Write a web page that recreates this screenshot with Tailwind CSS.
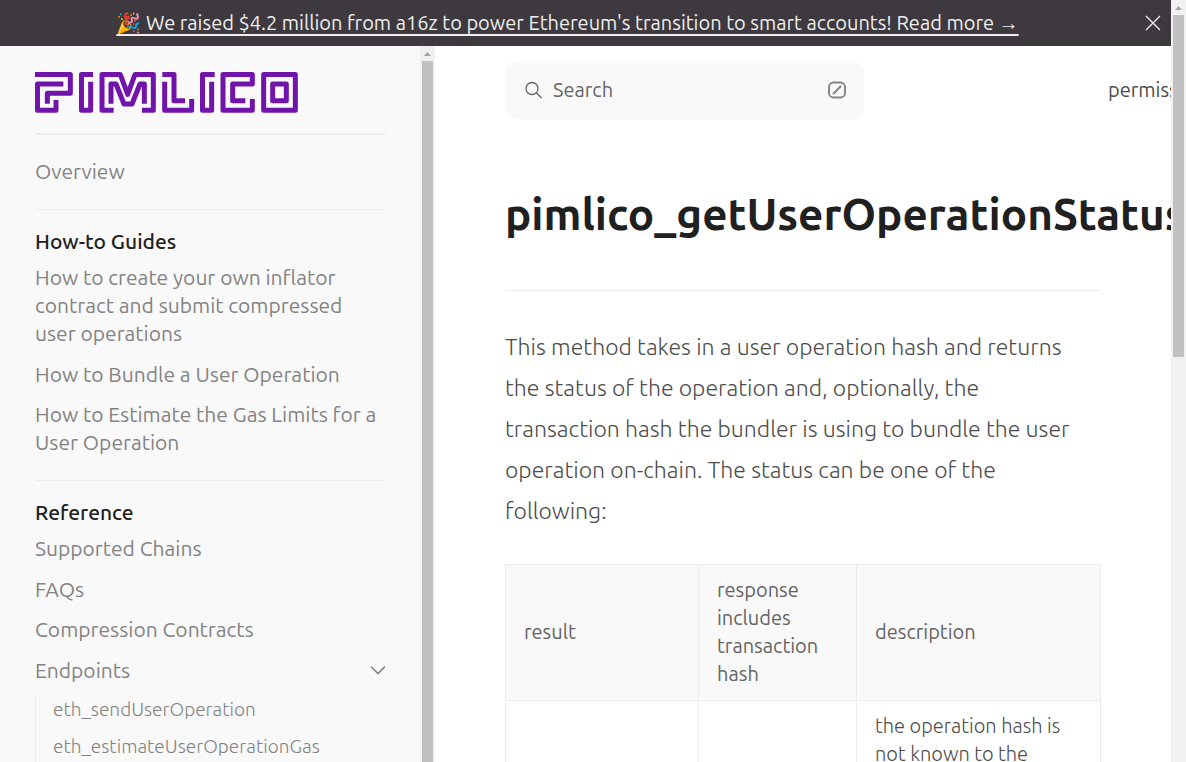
<!DOCTYPE html>
<html lang="en">
<head>
<meta charset="utf-8">
<title>pimlico_getUserOperationStatus</title>
<script src="https://cdn.jsdelivr.net/npm/@tailwindcss/browser@4"></script>
</head>
<body class="h-screen overflow-hidden flex bg-white font-['Ubuntu','Open_Sans','Noto_Sans',sans-serif] text-[#4c4c4c]">
<div class="flex-1 min-w-0 flex flex-col">
  <header class="h-[46px] shrink-0 flex items-center bg-[#3d393f] text-[#eeeeee]">
    <div class="flex-1 text-center px-3 whitespace-nowrap"><a href="#" class="text-[20px] leading-[28px] underline decoration-2 underline-offset-4">🎉 We raised $4.2 million from a16z to power Ethereum's transition to smart accounts! Read more →</a></div>
    <button aria-label="Dismiss banner" class="w-9 h-9 shrink-0 flex items-center justify-center">
      <svg class="w-4 h-4" viewBox="0 0 16 16" fill="none" stroke="currentColor" stroke-width="1.4"><path d="M1 1 15 15M15 1 1 15"/></svg>
    </button>
  </header>
  <div class="flex-1 min-h-0 flex">
    <aside class="w-[435px] shrink-0 flex bg-[#f9f9f9] text-[#838383]">
      <nav class="flex-1 min-w-0 overflow-hidden px-[35px] text-[21px] leading-[28px]">
        <a href="#" aria-label="Pimlico" class="block pt-[26px] pb-5 border-b-2 border-[#ececec]">
          <svg class="w-[263px] h-[41px]" viewBox="45 36 789 123" fill="none" stroke="#7115aa" stroke-width="15" stroke-linejoin="round">
            <path d="M45 43.500H151V100H82V131M130 72H52.500V151H108V120"/>
            <path d="M219 43.500H184.500V151H212V65"/>
            <path d="M281 151H246V43.500H301L323 103 345 43.500H400V151H366M273 131V72H288L312 132H336L360 72H373V131"/>
            <path d="M427 43.500H462V122H495M434 65V151H515V117"/>
            <path d="M584 43.500H547.500V151H575V65"/>
            <path d="M676 122H638V72H697V43.500H609V151H697V117"/>
            <path d="M731 43.500H826V151H731ZM758 72H799V122H758Z"/>
          </svg>
        </a>
        <div class="pt-[22px] pb-6 border-b border-[#ececec]"><a href="#" class="block">Overview</a></div>
        <section class="pt-[17px] pb-6 border-b border-[#ececec]">
          <h2 class="font-medium text-[#202020] mb-2">How-to Guides</h2>
          <ul class="flex flex-col gap-3">
            <li class="pb-px"><a href="#" class="block">How to create your own inflator<br>contract and submit compressed<br>user operations</a></li>
            <li><a href="#" class="block">How to Bundle a User Operation</a></li>
            <li><a href="#" class="block whitespace-nowrap">How to Estimate the Gas Limits for a<br>User Operation</a></li>
          </ul>
        </section>
        <section class="pt-[17px]">
          <h2 class="font-medium text-[#202020] mb-2">Reference</h2>
          <ul class="flex flex-col gap-3">
            <li class="pb-px"><a href="#" class="block">Supported Chains</a></li>
            <li><a href="#" class="block">FAQs</a></li>
            <li class="pb-px"><a href="#" class="block">Compression Contracts</a></li>
            <li>
              <button class="w-full flex items-center justify-between text-left">Endpoints
                <svg class="w-4 h-4" viewBox="0 0 16 16" fill="none" stroke="currentColor" stroke-width="1.6"><path d="M2 4.500 9 11.500 16 4.500"/></svg>
              </button>
              <ul class="mt-3 pt-px pl-[17px] border-l border-[#ececec] flex flex-col gap-[13px] text-[19px] leading-6 font-light">
                <li><a href="#" class="block">eth_sendUserOperation</a></li>
                <li class="pb-5"><a href="#" class="block">eth_estimateUserOperationGas</a></li>
              </ul>
            </li>
          </ul>
        </section>
      </nav>
      <div aria-hidden="true" class="w-[15px] shrink-0 bg-[#f1f1f1] flex flex-col items-center">
        <svg class="w-[15px] h-[15px] shrink-0" viewBox="0 0 15 15" fill="#a3a3a3"><path d="M4 10 7.500 6 11 10Z"/></svg>
        <div class="w-[11px] flex-1 bg-[#c1c1c1]"></div>
      </div>
    </aside>
    <main class="flex-1 min-w-0 overflow-hidden pl-[70px]">
      <div class="flex items-center mt-[15px] h-[58px]">
        <button class="w-[359px] h-full shrink-0 rounded-xl bg-[#f9f9f9] flex items-center pl-5 pr-[18px] text-[20px] leading-[28px] text-[#646464]">
          <svg class="w-[18px] h-[18px] mr-[10px]" viewBox="0 0 18 18" fill="none" stroke="currentColor" stroke-width="1.3"><circle cx="7" cy="7.500" r="6"/><path d="M11.300 11.800 16.500 17"/></svg>
          Search
          <svg class="ml-auto w-[18px] h-[18px] text-[#838383]" viewBox="0 0 18 18" fill="none" stroke="currentColor" stroke-width="1.900" stroke-linecap="round"><rect x="1" y="1.500" width="16" height="15" rx="4.500"/><path d="M5.500 12.500 12.500 5.500"/></svg>
        </button>
        <a href="#" class="ml-[244px] shrink-0 text-[20px] leading-[28px]">permissionless.js</a>
      </div>
      <div class="mr-[70px]">
        <h1 class="pt-[62px] pb-[43px] border-b border-[#ececec] text-[44px] leading-[66px] font-semibold text-[#202020] whitespace-nowrap">pimlico_getUserOperationStatus</h1>
        <p class="mt-[35px] text-[23px] leading-[41px] font-light whitespace-nowrap">This method takes in a user operation hash and returns<br>the status of the operation and, optionally, the<br>transaction hash the bundler is using to bundle the user<br>operation on-chain. The status can be one of the<br>following:</p>
        <table class="mt-[33px] w-full table-fixed border-collapse text-left text-[20px] leading-[28px]">
          <colgroup><col class="w-[193px]"><col class="w-[158px]"><col></colgroup>
          <thead><tr class="bg-[#f9f9f9] text-[#646464]">
            <th class="border border-[#ececec] px-[18px] pt-[11px] pb-3 font-normal">result</th>
            <th class="border border-[#ececec] px-[18px] pt-[11px] pb-3 font-normal">response<br>includes<br>transaction<br>hash</th>
            <th class="border border-[#ececec] px-[18px] pt-[11px] pb-3 font-normal">description</th>
          </tr></thead>
          <tbody><tr>
            <td class="border border-[#ececec] px-[18px] py-[11px]"></td>
            <td class="border border-[#ececec] px-[18px] py-[11px]"></td>
            <td class="border border-[#ececec] px-[18px] py-[11px] font-light">the operation hash is<br>not known to the<br>bundler</td>
          </tr></tbody>
        </table>
      </div>
    </main>
  </div>
</div>
<div aria-hidden="true" class="w-[15px] shrink-0 bg-[#f1f1f1] flex flex-col items-center">
  <svg class="w-[15px] h-[15px] shrink-0" viewBox="0 0 15 15" fill="#a3a3a3"><path d="M4 10 7.500 6 11 10Z"/></svg>
  <div class="w-[11px] h-[342px] bg-[#c1c1c1]"></div>
</div>
</body>
</html>
